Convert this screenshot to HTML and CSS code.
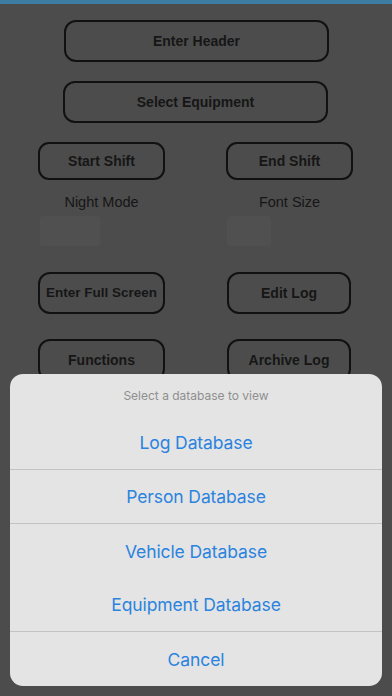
FILE: index.html
```html
<!DOCTYPE html>
<html>
<head>
<meta charset="utf-8">
<link rel="stylesheet" href="styles.css">
</head>
<body>
<div class="topbar"></div>
<main class="screen">
  <div class="row row-wide">
    <button class="btn btn-header">Enter Header</button>
  </div>
  <div class="row row-wide2">
    <button class="btn btn-equip">Select Equipment</button>
  </div>
  <div class="row row-pair row-shift">
    <button class="btn btn-left btn-short">Start Shift</button>
    <button class="btn btn-right-a btn-short">End Shift</button>
  </div>
  <div class="row row-pair row-labels">
    <div class="setting setting-left">
      <span class="label">Night Mode</span>
      <span class="ghost ghost-a"></span>
    </div>
    <div class="setting setting-right">
      <span class="label">Font Size</span>
      <span class="ghost ghost-b"></span>
    </div>
  </div>
  <div class="row row-pair row-full">
    <button class="btn btn-left btn-tall btn-small">Enter Full Screen</button>
    <button class="btn btn-right-b btn-tall">Edit Log</button>
  </div>
  <div class="row row-pair row-func">
    <button class="btn btn-left btn-tall">Functions</button>
    <button class="btn btn-right-b btn-tall">Archive Log</button>
  </div>
</main>

<div class="sheet">
  <div class="sheet-title">Select a database to view</div>
  <div class="sheet-item sep">Log Database</div>
  <div class="sheet-item sep">Person Database</div>
  <div class="sheet-item">Vehicle Database</div>
  <div class="sheet-item sep">Equipment Database</div>
  <div class="sheet-item">Cancel</div>
</div>
</body>
</html>
```

FILE: styles.css
```css
html, body {
  margin: 0;
  padding: 0;
}
body {
  width: 392px;
  height: 696px;
  background: #4c4c4c;
  position: relative;
  overflow: hidden;
  font-family: "Liberation Sans", Arial, sans-serif;
}
.topbar {
  height: 4px;
  background: #3d7ca3;
}
.screen {
  display: flex;
  flex-direction: column;
}
.row {
  display: flex;
}
.row-wide {
  margin-top: 16px;
  padding-left: 64px;
}
.row-wide2 {
  margin-top: 19px;
  padding-left: 63px;
}
.row-shift {
  margin-top: 19px;
}
.row-labels {
  margin-top: 14px;
}
.row-full {
  margin-top: 26px;
}
.row-func {
  margin-top: 25px;
}
.btn {
  box-sizing: border-box;
  display: block;
  background: transparent;
  border: 2px solid #111111;
  border-radius: 12px;
  color: #161616;
  font-family: "Liberation Sans", Arial, sans-serif;
  font-weight: bold;
  font-size: 14px;
  line-height: 18px;
  padding: 0;
  margin: 0;
}
.btn-header, .btn-equip {
  width: 265px;
  height: 42px;
}
.btn-left {
  margin-left: 38px;
  width: 127px;
}
.btn-right-a {
  margin-left: 61px;
  width: 127px;
}
.btn-right-b {
  margin-left: 62px;
  width: 124px;
}
.btn-short {
  height: 38px;
  border-radius: 11px;
}
.btn-tall {
  height: 42px;
}
.btn-small {
  font-size: 13.5px;
}
.setting {
  display: flex;
  flex-direction: column;
  align-items: center;
}
.setting-left {
  width: 127px;
  margin-left: 38px;
}
.setting-right {
  width: 127px;
  margin-left: 61px;
}
.label {
  font-size: 14.5px;
  color: #161616;
  line-height: 17px;
}
.ghost {
  display: block;
  margin-top: 5px;
  height: 30px;
  background: #505050;
  border-radius: 3px;
}
.ghost-a {
  width: 60px;
  align-self: flex-start;
  margin-left: 2px;
}
.ghost-b {
  width: 44px;
  align-self: flex-start;
  margin-left: 1px;
}
.sheet {
  position: absolute;
  left: 10px;
  top: 374px;
  width: 372px;
  height: 312px;
  background: #e4e4e4;
  border-radius: 13px;
  overflow: hidden;
  font-family: Inter, "Noto Sans", sans-serif;
}
.sheet-title {
  height: 42px;
  display: flex;
  align-items: center;
  justify-content: center;
  font-size: 12px;
  color: #8f8f8f;
}
.sheet-item {
  box-sizing: border-box;
  height: 54px;
  display: flex;
  align-items: center;
  justify-content: center;
  font-size: 17.5px;
  color: #2a83de;
  letter-spacing: -0.1px;
}
.sep {
  border-bottom: 1px solid #c3c3c3;
}
```
